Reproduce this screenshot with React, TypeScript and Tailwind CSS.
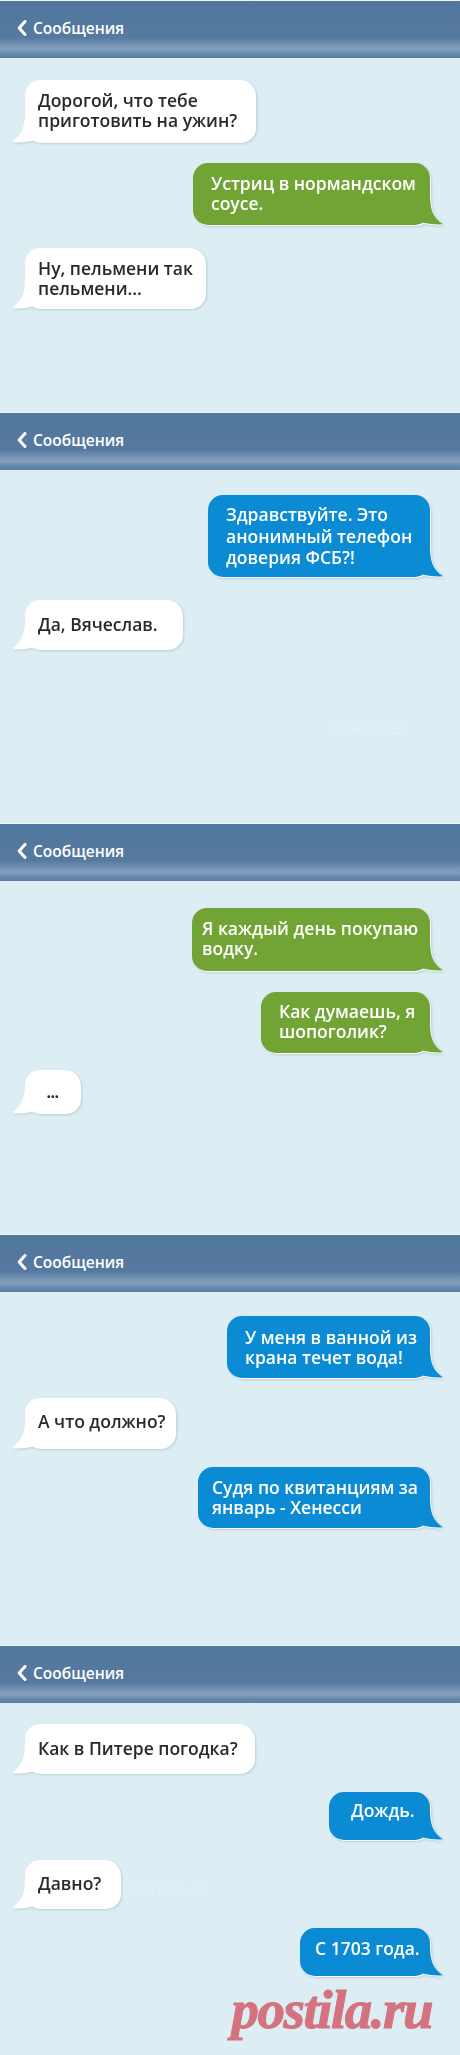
import React from "react";

type Side = "left" | "right";

type Msg = {
  side: Side;
  tone: "white" | "green" | "blue";
  lines: string[];
  mt: number;
  w: number;
  h: number;
  pl: number;
  pt: number;
  lh?: number;
  dots?: boolean;
};

const toneBg: Record<Msg["tone"], string> = {
  white: "bg-white text-[#2a2a2a]",
  green: "bg-[#71a434] text-white",
  blue: "bg-[#0b8bd3] text-white",
};

const toneFill: Record<Msg["tone"], string> = {
  white: "#ffffff",
  green: "#71a434",
  blue: "#0b8bd3",
};

function Tail({ side, fill }: { side: Side; fill: string }) {
  if (side === "right") {
    return (
      <svg
        className="absolute bottom-0 -right-[13px] w-[30px] h-[30px]"
        viewBox="0 0 30 30"
      >
        <path
          d="M0,0 H17 C17,14 20,23 30,29.3 C24,30 14,29.3 8,26.5 C5,28.3 2,29.6 0,30 Z"
          fill={fill}
        />
      </svg>
    );
  }
  return (
    <svg
      className="absolute bottom-0 -left-[13px] w-[30px] h-[30px]"
      viewBox="0 0 30 30"
    >
      <path
        d="M30,0 H13 C13,14 10,23 0,29.3 C6,30 16,29.3 22,26.5 C25,28.3 28,29.6 30,30 Z"
        fill={fill}
      />
    </svg>
  );
}

function Bubble({ m }: { m: Msg }) {
  const wrap =
    m.side === "right" ? "self-end mr-[30px]" : "self-start ml-[25px]";
  return (
    <div
      className={`relative ${wrap} [filter:drop-shadow(1px_1px_0_#ffffff)_drop-shadow(1px_1.5px_1px_rgba(20,50,70,0.16))]`}
      style={{ marginTop: m.mt, width: m.w, height: m.h }}
    >
      <Tail side={m.side} fill={toneFill[m.tone]} />
      {m.dots ? (
        <div
          className={`relative flex h-full w-full items-center justify-center rounded-[15px] ${toneBg[m.tone]}`}
        >
          <span className="text-[16px] font-bold leading-[16px] tracking-[-0.5px]">
            ...
          </span>
        </div>
      ) : (
        <div
          className={`relative h-full w-full rounded-[15px] whitespace-nowrap text-[17.5px] font-semibold ${toneBg[m.tone]}`}
          style={{
            paddingLeft: m.pl,
            paddingTop: m.pt,
            lineHeight: `${m.lh ?? 20}px`,
          }}
        >
          {m.lines.map((l, i) => (
            <div key={i}>{l}</div>
          ))}
        </div>
      )}
    </div>
  );
}

function Header() {
  return (
    <header className="flex h-[58px] shrink-0 items-center border-t border-[#eef6f9] bg-[linear-gradient(180deg,#52779d_0%,#55799f_64%,#7896b5_78%,#82a0bd_85%,#6788ad_93%,#5a7ea5_100%)] pb-[3px] pl-[17px]">
      <svg width="10" height="16" viewBox="0 0 10 16" className="shrink-0">
        <polyline
          points="8,1.5 2.2,8 8,14.5"
          fill="none"
          stroke="#ffffff"
          strokeWidth="3"
          strokeLinecap="round"
          strokeLinejoin="round"
        />
      </svg>
      <span className="ml-[6px] text-[15.5px] font-semibold leading-[20px] text-white">
        Сообщения
      </span>
    </header>
  );
}

function Panel({
  height,
  msgs,
  children,
}: {
  height: string;
  msgs: Msg[];
  children?: React.ReactNode;
}) {
  return (
    <section className={`relative flex flex-col bg-[#dcedf3] ${height}`}>
      <Header />
      {msgs.map((m, i) => (
        <Bubble key={i} m={m} />
      ))}
      {children}
    </section>
  );
}

const p1: Msg[] = [
  { side: "left", tone: "white", lines: ["Дорогой, что тебе", "приготовить на ужин?"], mt: 22, w: 230, h: 62, pl: 13, pt: 10 },
  { side: "right", tone: "green", lines: ["Устриц в нормандском", "соусе."], mt: 21, w: 237, h: 62, pl: 18, pt: 10 },
  { side: "left", tone: "white", lines: ["Ну, пельмени так", "пельмени..."], mt: 23, w: 180, h: 60, pl: 13, pt: 10 },
];

const p2: Msg[] = [
  { side: "right", tone: "blue", lines: ["Здравствуйте. Это", "анонимный телефон", "доверия ФСБ?!"], mt: 25, w: 222, h: 82, pl: 18, pt: 9, lh: 21.5 },
  { side: "left", tone: "white", lines: ["Да, Вячеслав."], mt: 23, w: 157, h: 49, pl: 13, pt: 14 },
];

const p3: Msg[] = [
  { side: "right", tone: "green", lines: ["Я каждый день покупаю", "водку."], mt: 27, w: 238, h: 63, pl: 10, pt: 10 },
  { side: "right", tone: "green", lines: ["Как думаешь, я", "шопоголик?"], mt: 21, w: 169, h: 61, pl: 18, pt: 9 },
  { side: "left", tone: "white", lines: [], mt: 17, w: 55, h: 43, pl: 0, pt: 0, dots: true },
];

const p4: Msg[] = [
  { side: "right", tone: "blue", lines: ["У меня в ванной из", "крана течет вода!"], mt: 24, w: 203, h: 62, pl: 18, pt: 11 },
  { side: "left", tone: "white", lines: ["А что должно?"], mt: 20, w: 150, h: 50, pl: 13, pt: 13 },
  { side: "right", tone: "blue", lines: ["Судя по квитанциям за", "январь - Хенесси"], mt: 19, w: 232, h: 61, pl: 14, pt: 10 },
];

const p5: Msg[] = [
  { side: "left", tone: "white", lines: ["Как в Питере погодка?"], mt: 21, w: 229, h: 49, pl: 13, pt: 14 },
  { side: "right", tone: "blue", lines: ["Дождь."], mt: 19, w: 101, h: 48, pl: 22, pt: 8 },
  { side: "left", tone: "white", lines: ["Давно?"], mt: 20, w: 95, h: 48, pl: 13, pt: 13 },
  { side: "right", tone: "blue", lines: ["С 1703 года."], mt: 20, w: 130, h: 48, pl: 15, pt: 10 },
];

export default function App() {
  return (
    <div className="w-[460px] overflow-hidden bg-[#dcedf3] font-['Open_Sans','Noto_Sans',sans-serif]">
      <Panel height="h-[412px]" msgs={p1} />
      <Panel height="h-[411px]" msgs={p2}>
        <span className="pointer-events-none absolute left-[327px] top-[306px] font-['Liberation_Sans',sans-serif] text-[15px] text-[#e3f0f5]">
          FISHKI.NET
        </span>
      </Panel>
      <Panel height="h-[411px]" msgs={p3} />
      <Panel height="h-[411px]" msgs={p4} />
      <Panel height="h-[410px]" msgs={p5}>
        <span className="pointer-events-none absolute left-[127px] top-[234px] font-['Liberation_Sans',sans-serif] text-[15px] text-[#e3f0f5]">
          FISHKI.NET
        </span>
        <div className="mr-[28px] mt-[4px] self-end font-['Liberation_Serif',serif] text-[55px] font-bold italic leading-[60px] tracking-[-1.5px] text-[#d4737f] [-webkit-text-stroke:1px_#d4737f]">
          postila.ru
        </div>
      </Panel>
    </div>
  );
}
